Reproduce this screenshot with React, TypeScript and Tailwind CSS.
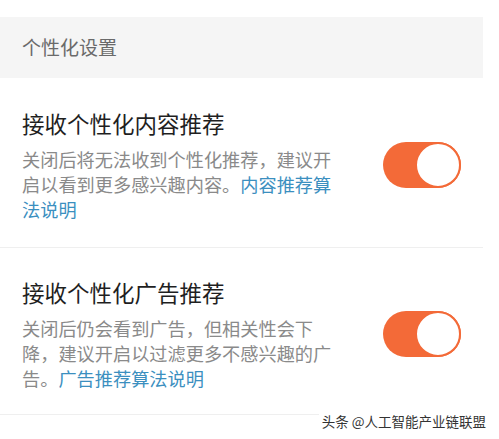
const font = { fontFamily: '"Noto Sans CJK SC", "Noto Sans", sans-serif' }

const Toggle = () => {
  return (
    <div className="relative h-[46px] w-[78px] shrink-0 rounded-full bg-[#f36a38]">
      <div className="absolute right-0 top-0 h-[46px] w-[46px] rounded-full border-2 border-[#f36a38] bg-white" />
    </div>
  )
}

const Row = ({ title, children, titleTop, gap, bottom }: { title: string; children: React.ReactNode; titleTop: string; gap: string; bottom: string }) => {
  return (
    <div className={`flex items-center justify-between border-b border-[#efefef] pl-[22px] pr-[22px] ${titleTop} ${bottom}`}>
      <div className="w-[322px]">
        <h2 className="text-[22.5px] leading-[30px] text-[#1f1f1f]">{title}</h2>
        <p className={`${gap} text-[18.2px] leading-[25px] text-[#8a8a8a]`}>{children}</p>
      </div>
      <Toggle />
    </div>
  )
}

const App = () => {
  return (
    <div className="relative h-[439px] w-[499px] overflow-hidden bg-white" style={font}>
      <div className="mr-[16px] pt-[17px]">
        <div className="flex h-[61px] items-center bg-[#f5f5f5] pl-[22px] text-[19px] text-[#6a6a6a]">个性化设置</div>
        <Row title="接收个性化内容推荐" titleTop="pt-[30px]" gap="mt-[9px]" bottom="pb-[25px]">
          关闭后将无法收到个性化推荐，建议开启以看到更多感兴趣内容。
          <span className="text-[#3b8fbf]">内容推荐算法说明</span>
        </Row>
        <Row title="接收个性化广告推荐" titleTop="pt-[29px]" gap="mt-[9px]" bottom="pb-[23px]">
          关闭后仍会看到广告，但相关性会下降，建议开启以过滤更多不感兴趣的广告。
          <span className="text-[#3b8fbf]">广告推荐算法说明</span>
        </Row>
      </div>
      <div className="absolute right-[10px] top-[409px] bg-white px-[3px] text-[13.5px] leading-[24px] text-[#333]">头条 @人工智能产业链联盟</div>
    </div>
  )
}

export default App
